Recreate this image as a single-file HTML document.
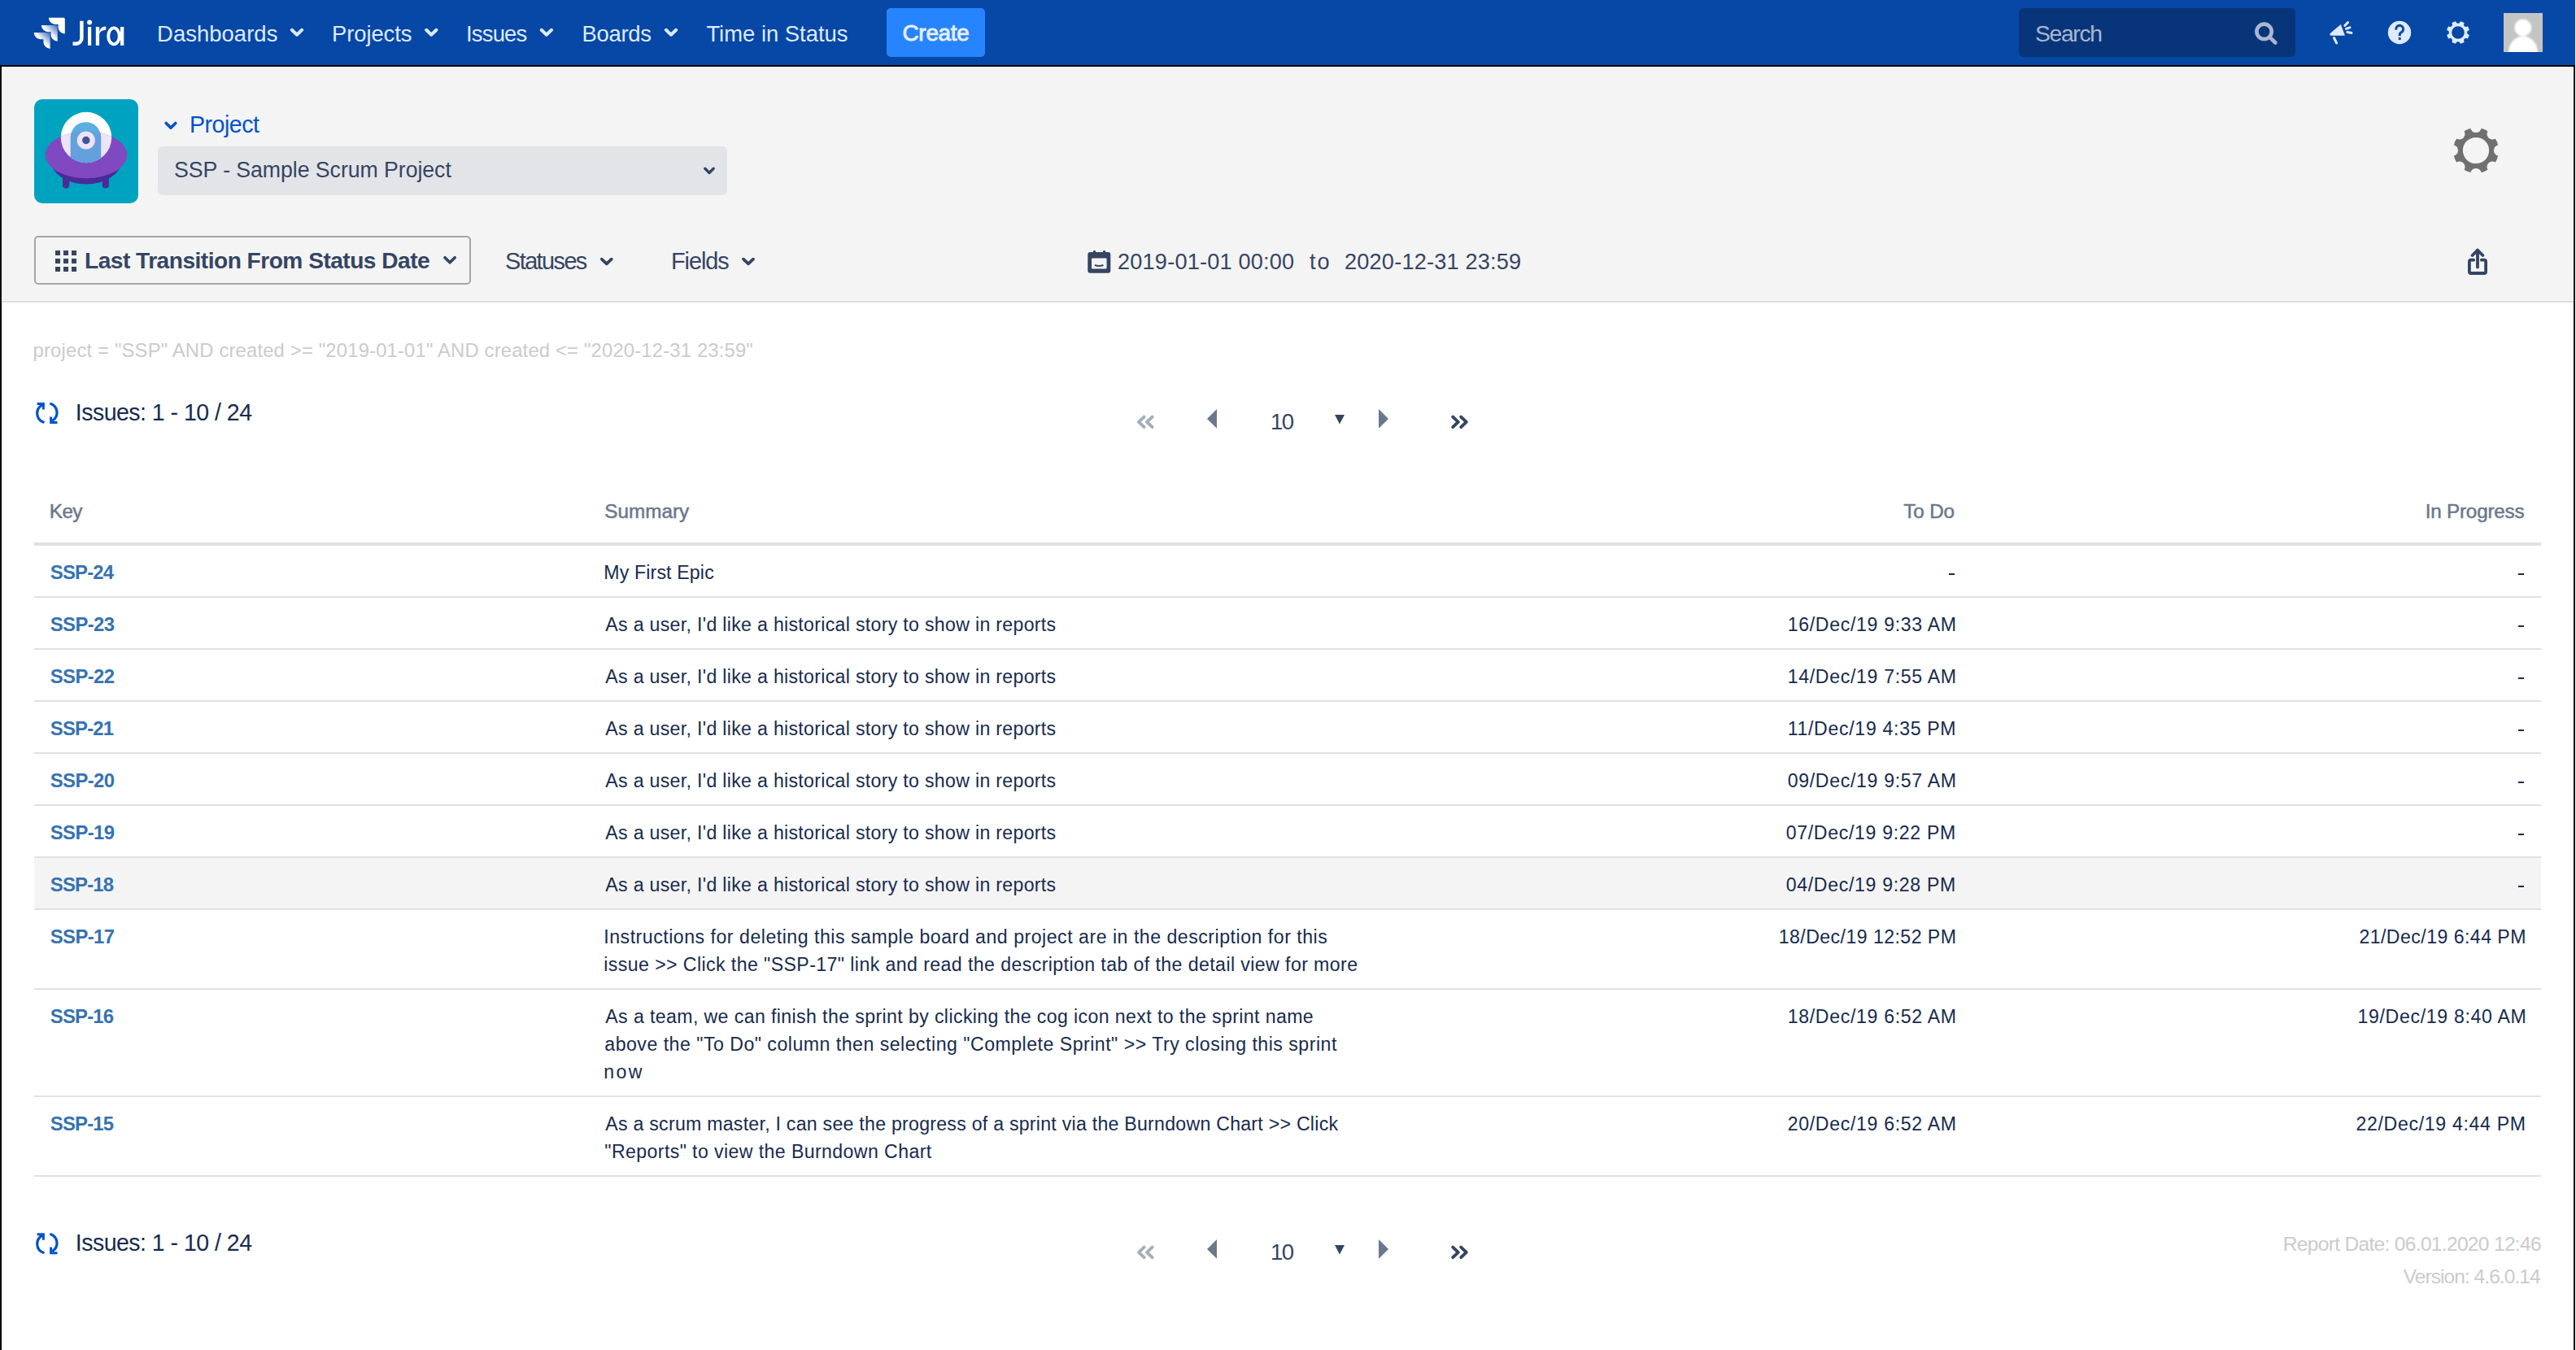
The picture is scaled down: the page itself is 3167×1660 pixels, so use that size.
<!DOCTYPE html>
<html><head><meta charset="utf-8"><style>
html,body{margin:0;padding:0;}
body{width:3167px;height:1660px;position:relative;overflow:hidden;background:#fff;font-family:"Liberation Sans",sans-serif;}
.a{position:absolute;}
.t{position:absolute;white-space:nowrap;}
svg{position:absolute;overflow:visible;}
</style></head><body>
<div class="a" style="left:0px;top:0px;width:3166px;height:80px;background:#0747a6;"></div>
<div class="a" style="left:0px;top:80px;width:3166px;height:2px;background:#000;"></div>
<div class="a" style="left:0px;top:80px;width:2px;height:1580px;background:#000;"></div>
<div class="a" style="left:3164px;top:80px;width:2px;height:1580px;background:#000;"></div>
<div class="a" style="left:2px;top:82px;width:3162px;height:288px;background:#fff;"></div>
<div class="a" style="left:3px;top:83px;width:3160px;height:287px;background:#f4f4f4;"></div>
<div class="a" style="left:2px;top:370px;width:3162px;height:2px;background:#dcdde3;"></div>
<div class="a" style="left:1090px;top:10px;width:121px;height:60px;background:#2684ff;border-radius:5px;"></div>
<div class="a" style="left:2482px;top:10px;width:340px;height:60px;background:#08357a;border-radius:6px;"></div>
<svg class="a" style="left:0;top:0" width="3167" height="1660" viewBox="0 0 3167 1660"><defs><linearGradient id="jg1" x1="0.95" y1="0.05" x2="0.35" y2="0.65"><stop offset="0" stop-color="#fff" stop-opacity="0.25"/><stop offset="0.75" stop-color="#fff"/></linearGradient></defs><g transform="translate(38,18) scale(1.9)"><path fill="#fff" d="M11.53 2c0 2.4 1.97 4.35 4.35 4.35h1.78v1.7c0 2.4 1.94 4.34 4.34 4.35V2.84a.84.84 0 0 0-.84-.84H11.53z"/><path fill="url(#jg1)" d="M6.77 6.8a4.362 4.362 0 0 0 4.34 4.34h1.8v1.72a4.362 4.362 0 0 0 4.34 4.34V7.63a.841.841 0 0 0-.83-.83H6.77z"/><path fill="url(#jg1)" d="M2 11.6c0 2.4 1.95 4.34 4.35 4.34h1.78v1.72c.01 2.39 1.95 4.34 4.34 4.34v-9.57a.84.84 0 0 0-.84-.84L2 11.6z"/></g><path fill="#fff" d="M98.2,25.8 H102.6 V47 A9,9 0 0 1 93.6,56 H89.5 V51.4 H93.6 A4.4,4.4 0 0 0 98.2,47 Z"/><circle cx="110.1" cy="27.4" r="3" fill="#fff"/><rect x="108" y="33.1" width="4.2" height="22.8" fill="#fff"/><rect x="117.8" y="33.1" width="4.3" height="22.8" fill="#fff"/><path fill="#fff" d="M122.1,41 C122.1,35.5 125,32.5 130.2,32.5 V36.9 C126.3,36.9 122.1,38.5 122.1,43 Z"/><ellipse cx="140" cy="44.4" rx="6.8" ry="10.0" fill="none" stroke="#fff" stroke-width="3.9"/><rect x="148" y="33.1" width="4.3" height="22.8" fill="#fff"/><polyline points="358.8,36.8 365.0,42.699999999999996 371.2,36.8" fill="none" stroke="#deebff" stroke-width="4.0" stroke-linecap="round" stroke-linejoin="round"/><polyline points="524.0999999999999,36.8 530.3,42.699999999999996 536.5,36.8" fill="none" stroke="#deebff" stroke-width="4.0" stroke-linecap="round" stroke-linejoin="round"/><polyline points="665.65,36.8 671.85,42.699999999999996 678.0500000000001,36.8" fill="none" stroke="#deebff" stroke-width="4.0" stroke-linecap="round" stroke-linejoin="round"/><polyline points="818.8,36.8 825.0,42.699999999999996 831.2,36.8" fill="none" stroke="#deebff" stroke-width="4.0" stroke-linecap="round" stroke-linejoin="round"/><circle cx="2783.6" cy="38.8" r="9.2" fill="none" stroke="#a9b7d0" stroke-width="4.6"/><line x1="2790.5" y1="45.7" x2="2797.3" y2="52.5" stroke="#a9b7d0" stroke-width="4.6" stroke-linecap="round"/><path fill="#deebff" d="M2864.8,41.1 L2877.8,30.0 L2883.0,43.8 L2866.0,43.8 Q2863.6,43.4 2864.8,41.1 Z"/><line x1="2869.5" y1="46.5" x2="2872.7" y2="53" stroke="#deebff" stroke-width="3" stroke-linecap="round"/><g stroke="#deebff" stroke-width="3" stroke-linecap="round"><line x1="2882.8" y1="31.5" x2="2886.5" y2="27.6"/><line x1="2884.5" y1="35.4" x2="2889" y2="33.8"/><line x1="2886" y1="39.6" x2="2891" y2="40.4"/></g><circle cx="2950" cy="40" r="14.2" fill="#deebff"/><path d="M2945.9,36.6 A4.4,4.4 0 1 1 2952.3,39.6 Q2950.3,40.6 2950.3,42.4 V44.2" fill="none" stroke="#0747a6" stroke-width="3" stroke-linecap="butt"/><rect x="2948.6" y="45.9" width="3.3" height="3.2" rx="1" fill="#0747a6"/><mask id="g1" maskUnits="userSpaceOnUse" x="3002.95" y="20.95" width="38.1" height="38.1"><rect x="3002.95" y="20.95" width="38.1" height="38.1" fill="#000"/><circle cx="3022" cy="40" r="14.05" fill="#fff"/><circle cx="3022.00" cy="26.10" r="2.75" fill="#000"/><circle cx="3031.83" cy="30.17" r="2.75" fill="#000"/><circle cx="3035.90" cy="40.00" r="2.75" fill="#000"/><circle cx="3031.83" cy="49.83" r="2.75" fill="#000"/><circle cx="3022.00" cy="53.90" r="2.75" fill="#000"/><circle cx="3012.17" cy="49.83" r="2.75" fill="#000"/><circle cx="3008.10" cy="40.00" r="2.75" fill="#000"/><circle cx="3012.17" cy="30.17" r="2.75" fill="#000"/><circle cx="3022" cy="40" r="7.8" fill="#000"/></mask><rect x="3002.95" y="20.95" width="38.1" height="38.1" fill="#deebff" mask="url(#g1)"/><defs><clipPath id="avc"><rect x="3078" y="16" width="48" height="48"/></clipPath><filter id="avb" x="-30%" y="-30%" width="160%" height="160%"><feGaussianBlur stdDeviation="1.3"/></filter></defs><rect x="3078" y="16" width="48" height="48" fill="#c4c4c4"/><g clip-path="url(#avc)"><g filter="url(#avb)"><circle cx="3101.8" cy="34" r="10.4" fill="#fff"/><ellipse cx="3102" cy="65" rx="18" ry="20.5" fill="#fff"/></g></g><g transform="translate(42,122)"><rect width="128" height="128" rx="10" fill="#00a3bf"/><defs><clipPath id="sauc"><ellipse cx="64" cy="68.4" rx="50.3" ry="28.8"/></clipPath><clipPath id="dome"><circle cx="64" cy="47" r="31.2"/></clipPath></defs><rect x="35" y="88" width="8.2" height="21.5" rx="4.1" fill="#4b2a99"/><rect x="83.7" y="88" width="8.2" height="21.5" rx="4.1" fill="#4b2a99"/><ellipse cx="64" cy="74" rx="44" ry="30.5" fill="#4b2a99"/><circle cx="64" cy="47" r="31.2" fill="#fff"/><ellipse cx="64" cy="68.4" rx="50.3" ry="28.8" fill="#8049c2"/><g clip-path="url(#sauc)"><circle cx="64" cy="47" r="31.2" fill="#ece4f6"/></g><g clip-path="url(#dome)"><path d="M44.8,46.8 A18.65,18.65 0 0 1 82.1,46.8 V90 H44.8 Z" fill="#5aaee0"/><g clip-path="url(#sauc)"><path d="M44.8,46.8 A18.65,18.65 0 0 1 82.1,46.8 V90 H44.8 Z" fill="#64a0dc"/></g></g><circle cx="63.8" cy="50.5" r="11.1" fill="#ece4f6"/><circle cx="63.8" cy="50.5" r="4.7" fill="#3f5495"/></g><polyline points="204.2,151.5 210,157.1 215.8,151.5" fill="none" stroke="#0052cc" stroke-width="3.6" stroke-linecap="round" stroke-linejoin="round"/></svg>
<div class="a" style="left:194px;top:180px;width:700px;height:60px;background:#e3e4e8;border-radius:6px;"></div>
<div class="a" style="left:42px;top:290px;width:533px;height:56px;border:2px solid #a5a5a5;border-radius:5px;"></div>
<div class="a" style="left:68px;top:308px;width:6px;height:6px;background:#344563;"></div>
<div class="a" style="left:68px;top:318px;width:6px;height:6px;background:#344563;"></div>
<div class="a" style="left:68px;top:328px;width:6px;height:6px;background:#344563;"></div>
<div class="a" style="left:78px;top:308px;width:6px;height:6px;background:#344563;"></div>
<div class="a" style="left:78px;top:318px;width:6px;height:6px;background:#344563;"></div>
<div class="a" style="left:78px;top:328px;width:6px;height:6px;background:#344563;"></div>
<div class="a" style="left:88px;top:308px;width:6px;height:6px;background:#344563;"></div>
<div class="a" style="left:88px;top:318px;width:6px;height:6px;background:#344563;"></div>
<div class="a" style="left:88px;top:328px;width:6px;height:6px;background:#344563;"></div>
<div class="a" style="left:42px;top:667px;width:3082px;height:4px;background:#dfe1e6;"></div>
<div class="a" style="left:42px;top:1055px;width:3082px;height:62px;background:#f4f4f4;"></div>
<div class="a" style="left:42px;top:733px;width:3082px;height:2px;background:#dfe1e6;"></div>
<div class="a" style="left:42px;top:797px;width:3082px;height:2px;background:#dfe1e6;"></div>
<div class="a" style="left:42px;top:861px;width:3082px;height:2px;background:#dfe1e6;"></div>
<div class="a" style="left:42px;top:925px;width:3082px;height:2px;background:#dfe1e6;"></div>
<div class="a" style="left:42px;top:989px;width:3082px;height:2px;background:#dfe1e6;"></div>
<div class="a" style="left:42px;top:1053px;width:3082px;height:2px;background:#dfe1e6;"></div>
<div class="a" style="left:42px;top:1117px;width:3082px;height:2px;background:#dfe1e6;"></div>
<div class="a" style="left:42px;top:1215px;width:3082px;height:2px;background:#dfe1e6;"></div>
<div class="a" style="left:42px;top:1347px;width:3082px;height:2px;background:#dfe1e6;"></div>
<div class="a" style="left:42px;top:1445px;width:3082px;height:2px;background:#dfe1e6;"></div>
<svg class="a" style="left:0;top:0" width="3167" height="1660" viewBox="0 0 3167 1660"><polyline points="866.8,207.3 872,212.5 877.2,207.3" fill="none" stroke="#344563" stroke-width="3.4" stroke-linecap="round" stroke-linejoin="round"/><polyline points="547.0,316.7 553.1,322.8 559.2,316.7" fill="none" stroke="#344563" stroke-width="3.6" stroke-linecap="round" stroke-linejoin="round"/><polyline points="739.8,318.6 745.8,324.40000000000003 751.8,318.6" fill="none" stroke="#344563" stroke-width="3.7" stroke-linecap="round" stroke-linejoin="round"/><polyline points="914.0,318.6 920.0,324.40000000000003 926.0,318.6" fill="none" stroke="#344563" stroke-width="3.7" stroke-linecap="round" stroke-linejoin="round"/><mask id="g2" maskUnits="userSpaceOnUse" x="3011.0" y="152.0" width="66.0" height="66.0"><rect x="3011.0" y="152.0" width="66.0" height="66.0" fill="#000"/><circle cx="3044" cy="185" r="28.0" fill="#fff"/><circle cx="3044.00" cy="156.40" r="6.7" fill="#000"/><circle cx="3064.22" cy="164.78" r="6.7" fill="#000"/><circle cx="3072.60" cy="185.00" r="6.7" fill="#000"/><circle cx="3064.22" cy="205.22" r="6.7" fill="#000"/><circle cx="3044.00" cy="213.60" r="6.7" fill="#000"/><circle cx="3023.78" cy="205.22" r="6.7" fill="#000"/><circle cx="3015.40" cy="185.00" r="6.7" fill="#000"/><circle cx="3023.78" cy="164.78" r="6.7" fill="#000"/><circle cx="3044" cy="185" r="16.1" fill="#000"/></mask><rect x="3011.0" y="152.0" width="66.0" height="66.0" fill="#707070" mask="url(#g2)"/><rect x="1337.3" y="310" width="28" height="25.8" rx="3" fill="#344563"/><rect x="1342" y="317.6" width="18.6" height="13" rx="1" fill="#f4f4f4"/><rect x="1344" y="308" width="3" height="4" rx="1" fill="#344563"/><rect x="1356" y="308" width="3" height="4" rx="1" fill="#344563"/><path d="M1346,326 Q1351.2,328 1356.4,326" stroke="#344563" stroke-width="2" fill="none"/><g fill="none" stroke="#344563" stroke-width="3.8" stroke-linecap="round" stroke-linejoin="round"><polyline points="3039.6,314 3046,307.6 3052.4,314"/><line x1="3046" y1="308" x2="3046" y2="328.5"/><path d="M3041.2,319.7 H3037.9 Q3035.9,319.7 3035.9,321.7 V334 Q3035.9,336 3037.9,336 H3054.1 Q3056.1,336 3056.1,334 V321.7 Q3056.1,319.7 3054.1,319.7 H3050.8"/></g><g transform="translate(0,0.0)" fill="none" stroke="#0052cc" stroke-width="3.2" stroke-linecap="round"><path d="M53.2,519.1 A11.6,11.6 0 0 1 51.2,498.4"/><polyline points="45.6,496.5 53.4,496.5 53.4,503.6" stroke-width="2.9" stroke-linecap="butt" stroke-linejoin="miter"/><path d="M62.6,496.6 A11.6,11.6 0 0 1 65.4,516.6"/><polyline points="62.6,512.4 62.6,519.5 70.5,519.5" stroke-width="2.9" stroke-linecap="butt" stroke-linejoin="miter"/></g><g fill="none" stroke="#a5adba" stroke-width="3.9" stroke-linecap="round" stroke-linejoin="round"><polyline points="1406.6,512.6 1400,518.9 1406.6,525.2"/><polyline points="1416.6,512.6 1410,518.9 1416.6,525.2"/></g><polygon points="1484,515 1496,503 1496,526.8" fill="#6b778c"/><polygon points="1641,510 1653,510 1647,521.4" fill="#344563"/><polygon points="1695,503 1707,515 1695,526.8" fill="#6b778c"/><g fill="none" stroke="#344563" stroke-width="3.9" stroke-linecap="round" stroke-linejoin="round"><polyline points="1786.2,512.6 1792.8,518.9 1786.2,525.2"/><polyline points="1796.2,512.6 1802.8,518.9 1796.2,525.2"/></g><g transform="translate(0,1021.2)" fill="none" stroke="#0052cc" stroke-width="3.2" stroke-linecap="round"><path d="M53.2,519.1 A11.6,11.6 0 0 1 51.2,498.4"/><polyline points="45.6,496.5 53.4,496.5 53.4,503.6" stroke-width="2.9" stroke-linecap="butt" stroke-linejoin="miter"/><path d="M62.6,496.6 A11.6,11.6 0 0 1 65.4,516.6"/><polyline points="62.6,512.4 62.6,519.5 70.5,519.5" stroke-width="2.9" stroke-linecap="butt" stroke-linejoin="miter"/></g><g fill="none" stroke="#a5adba" stroke-width="3.9" stroke-linecap="round" stroke-linejoin="round"><polyline points="1406.6,1533.6 1400,1539.9 1406.6,1546.2"/><polyline points="1416.6,1533.6 1410,1539.9 1416.6,1546.2"/></g><polygon points="1484,1536 1496,1524 1496,1547.8" fill="#6b778c"/><polygon points="1641,1531 1653,1531 1647,1542.4" fill="#344563"/><polygon points="1695,1524 1707,1536 1695,1547.8" fill="#6b778c"/><g fill="none" stroke="#344563" stroke-width="3.9" stroke-linecap="round" stroke-linejoin="round"><polyline points="1786.2,1533.6 1792.8,1539.9 1786.2,1546.2"/><polyline points="1796.2,1533.6 1802.8,1539.9 1796.2,1546.2"/></g></svg>
<div class="t" style="top:27.88px;font-size:27.43px;line-height:27.43px;color:#deebff;letter-spacing:0.044px;left:193.10px;">Dashboards</div><div class="t" style="top:27.88px;font-size:27.43px;line-height:27.43px;color:#deebff;letter-spacing:-0.086px;left:408.00px;">Projects</div><div class="t" style="top:27.88px;font-size:27.43px;line-height:27.43px;color:#deebff;letter-spacing:-0.800px;left:573.00px;">Issues</div><div class="t" style="top:27.88px;font-size:27.43px;line-height:27.43px;color:#deebff;letter-spacing:-0.240px;left:715.40px;">Boards</div><div class="t" style="top:27.88px;font-size:27.43px;line-height:27.43px;color:#deebff;letter-spacing:-0.008px;left:868.40px;">Time in Status</div><div class="t" style="top:27.42px;font-size:27.86px;line-height:27.86px;color:#e6efff;letter-spacing:-0.260px;-webkit-text-stroke:0.9px #e6efff;left:1109.50px;">Create</div><div class="t" style="top:27.45px;font-size:28.29px;line-height:28.29px;color:#a9b7d0;letter-spacing:-1.340px;left:2502.00px;">Search</div><div class="t" style="top:139.42px;font-size:28.57px;line-height:28.57px;color:#0052cc;letter-spacing:-0.500px;left:233.00px;">Project</div><div class="t" style="top:196.40px;font-size:26.71px;line-height:26.71px;color:#344563;letter-spacing:-0.060px;left:214.00px;">SSP - Sample Scrum Project</div><div class="t" style="top:307.38px;font-size:28.14px;line-height:28.14px;color:#344563;letter-spacing:-0.516px;font-weight:700;left:104.00px;">Last Transition From Status Date</div><div class="t" style="top:306.77px;font-size:28.86px;line-height:28.86px;color:#344563;letter-spacing:-1.571px;left:621.00px;">Statuses</div><div class="t" style="top:306.77px;font-size:28.86px;line-height:28.86px;color:#344563;letter-spacing:-1.060px;left:825.00px;">Fields</div><div class="t" style="top:308.13px;font-size:27.14px;line-height:27.14px;color:#344563;letter-spacing:0.200px;left:1374.00px;">2019-01-01 00:00</div><div class="t" style="top:308.13px;font-size:27.14px;line-height:27.14px;color:#344563;letter-spacing:2.000px;left:1610.00px;">to</div><div class="t" style="top:308.13px;font-size:27.14px;line-height:27.14px;color:#344563;letter-spacing:0.200px;left:1653.00px;">2020-12-31 23:59</div><div class="t" style="top:419.12px;font-size:23.86px;line-height:23.86px;color:#cbcbcb;letter-spacing:0.150px;left:40.60px;">project = "SSP" AND created &gt;= "2019-01-01" AND created &lt;= "2020-12-31 23:59"</div><div class="t" style="top:493.42px;font-size:28.57px;line-height:28.57px;color:#172b4d;letter-spacing:-0.544px;left:92.80px;">Issues: 1 - 10 / 24</div><div class="t" style="top:505.17px;font-size:27.57px;line-height:27.57px;color:#344563;letter-spacing:-1.500px;left:1562.00px;">10</div><div class="t" style="top:1514.02px;font-size:28.57px;line-height:28.57px;color:#172b4d;letter-spacing:-0.544px;left:92.80px;">Issues: 1 - 10 / 24</div><div class="t" style="top:1526.17px;font-size:27.57px;line-height:27.57px;color:#344563;letter-spacing:-1.500px;left:1562.00px;">10</div><div class="t" style="top:617.05px;font-size:24.29px;line-height:24.29px;color:#6b778c;letter-spacing:-0.600px;-webkit-text-stroke:0.5px #6b778c;left:60.80px;">Key</div><div class="t" style="top:617.05px;font-size:24.29px;line-height:24.29px;color:#6b778c;letter-spacing:0.000px;-webkit-text-stroke:0.5px #6b778c;left:743.30px;">Summary</div><div class="t" style="top:617.05px;font-size:24.29px;line-height:24.29px;color:#6b778c;letter-spacing:-0.150px;-webkit-text-stroke:0.5px #6b778c;left:2340.30px;">To Do</div><div class="t" style="top:617.05px;font-size:24.29px;line-height:24.29px;color:#6b778c;letter-spacing:-0.240px;-webkit-text-stroke:0.5px #6b778c;left:2981.80px;">In Progress</div><div class="t" style="top:692.12px;font-size:23.86px;line-height:23.86px;color:#3572b0;letter-spacing:-0.800px;font-weight:700;left:61.80px;">SSP-24</div><div class="t" style="top:693.23px;font-size:23.14px;line-height:23.14px;color:#172b4d;letter-spacing:0.150px;left:742.30px;">My First Epic</div><div class="t" style="top:756.12px;font-size:23.86px;line-height:23.86px;color:#3572b0;letter-spacing:-0.600px;font-weight:700;left:61.80px;">SSP-23</div><div class="t" style="top:757.23px;font-size:23.14px;line-height:23.14px;color:#172b4d;letter-spacing:0.309px;left:744.30px;">As a user, I'd like a historical story to show in reports</div><div class="t" style="top:757.23px;font-size:23.14px;line-height:23.14px;color:#172b4d;letter-spacing:0.669px;left:2197.70px;">16/Dec/19 9:33 AM</div><div class="t" style="top:820.12px;font-size:23.86px;line-height:23.86px;color:#3572b0;letter-spacing:-0.600px;font-weight:700;left:61.80px;">SSP-22</div><div class="t" style="top:821.23px;font-size:23.14px;line-height:23.14px;color:#172b4d;letter-spacing:0.309px;left:744.30px;">As a user, I'd like a historical story to show in reports</div><div class="t" style="top:821.23px;font-size:23.14px;line-height:23.14px;color:#172b4d;letter-spacing:0.669px;left:2197.70px;">14/Dec/19 7:55 AM</div><div class="t" style="top:884.12px;font-size:23.86px;line-height:23.86px;color:#3572b0;letter-spacing:-0.800px;font-weight:700;left:61.80px;">SSP-21</div><div class="t" style="top:885.23px;font-size:23.14px;line-height:23.14px;color:#172b4d;letter-spacing:0.309px;left:744.30px;">As a user, I'd like a historical story to show in reports</div><div class="t" style="top:885.23px;font-size:23.14px;line-height:23.14px;color:#172b4d;letter-spacing:0.669px;left:2197.70px;">11/Dec/19 4:35 PM</div><div class="t" style="top:948.12px;font-size:23.86px;line-height:23.86px;color:#3572b0;letter-spacing:-0.600px;font-weight:700;left:61.80px;">SSP-20</div><div class="t" style="top:949.23px;font-size:23.14px;line-height:23.14px;color:#172b4d;letter-spacing:0.309px;left:744.30px;">As a user, I'd like a historical story to show in reports</div><div class="t" style="top:949.23px;font-size:23.14px;line-height:23.14px;color:#172b4d;letter-spacing:0.669px;left:2197.70px;">09/Dec/19 9:57 AM</div><div class="t" style="top:1012.12px;font-size:23.86px;line-height:23.86px;color:#3572b0;letter-spacing:-0.600px;font-weight:700;left:61.80px;">SSP-19</div><div class="t" style="top:1013.23px;font-size:23.14px;line-height:23.14px;color:#172b4d;letter-spacing:0.309px;left:744.30px;">As a user, I'd like a historical story to show in reports</div><div class="t" style="top:1013.23px;font-size:23.14px;line-height:23.14px;color:#172b4d;letter-spacing:0.669px;left:2195.70px;">07/Dec/19 9:22 PM</div><div class="t" style="top:1076.12px;font-size:23.86px;line-height:23.86px;color:#3572b0;letter-spacing:-0.800px;font-weight:700;left:61.80px;">SSP-18</div><div class="t" style="top:1077.23px;font-size:23.14px;line-height:23.14px;color:#172b4d;letter-spacing:0.309px;left:744.30px;">As a user, I'd like a historical story to show in reports</div><div class="t" style="top:1077.23px;font-size:23.14px;line-height:23.14px;color:#172b4d;letter-spacing:0.669px;left:2195.70px;">04/Dec/19 9:28 PM</div><div class="t" style="top:1140.12px;font-size:23.86px;line-height:23.86px;color:#3572b0;letter-spacing:-0.600px;font-weight:700;left:61.80px;">SSP-17</div><div class="t" style="top:1141.23px;font-size:23.14px;line-height:23.14px;color:#172b4d;letter-spacing:0.508px;left:742.30px;">Instructions for deleting this sample board and project are in the description for this</div><div class="t" style="top:1175.23px;font-size:23.14px;line-height:23.14px;color:#172b4d;letter-spacing:0.412px;left:742.30px;">issue &gt;&gt; Click the "SSP-17" link and read the description tab of the detail view for more</div><div class="t" style="top:1141.23px;font-size:23.14px;line-height:23.14px;color:#172b4d;letter-spacing:0.435px;left:2186.70px;">18/Dec/19 12:52 PM</div><div class="t" style="top:1141.23px;font-size:23.14px;line-height:23.14px;color:#172b4d;letter-spacing:0.444px;left:2900.40px;">21/Dec/19 6:44 PM</div><div class="t" style="top:1238.12px;font-size:23.86px;line-height:23.86px;color:#3572b0;letter-spacing:-0.800px;font-weight:700;left:61.80px;">SSP-16</div><div class="t" style="top:1239.23px;font-size:23.14px;line-height:23.14px;color:#172b4d;letter-spacing:0.389px;left:744.30px;">As a team, we can finish the sprint by clicking the cog icon next to the sprint name</div><div class="t" style="top:1273.23px;font-size:23.14px;line-height:23.14px;color:#172b4d;letter-spacing:0.490px;left:743.30px;">above the "To Do" column then selecting "Complete Sprint" &gt;&gt; Try closing this sprint</div><div class="t" style="top:1307.23px;font-size:23.14px;line-height:23.14px;color:#172b4d;letter-spacing:2.400px;left:742.30px;">now</div><div class="t" style="top:1239.23px;font-size:23.14px;line-height:23.14px;color:#172b4d;letter-spacing:0.669px;left:2197.70px;">18/Dec/19 6:52 AM</div><div class="t" style="top:1239.23px;font-size:23.14px;line-height:23.14px;color:#172b4d;letter-spacing:0.669px;left:2898.40px;">19/Dec/19 8:40 AM</div><div class="t" style="top:1370.12px;font-size:23.86px;line-height:23.86px;color:#3572b0;letter-spacing:-0.800px;font-weight:700;left:61.80px;">SSP-15</div><div class="t" style="top:1371.23px;font-size:23.14px;line-height:23.14px;color:#172b4d;letter-spacing:0.257px;left:744.30px;">As a scrum master, I can see the progress of a sprint via the Burndown Chart &gt;&gt; Click</div><div class="t" style="top:1405.23px;font-size:23.14px;line-height:23.14px;color:#172b4d;letter-spacing:0.400px;left:743.30px;">"Reports" to view the Burndown Chart</div><div class="t" style="top:1371.23px;font-size:23.14px;line-height:23.14px;color:#172b4d;letter-spacing:0.669px;left:2197.70px;">20/Dec/19 6:52 AM</div><div class="t" style="top:1371.23px;font-size:23.14px;line-height:23.14px;color:#172b4d;letter-spacing:0.669px;left:2896.40px;">22/Dec/19 4:44 PM</div><div class="t" style="top:1517.82px;font-size:24.57px;line-height:24.57px;color:#cbcbcb;letter-spacing:-0.696px;left:2806.80px;">Report Date: 06.01.2020 12:46</div><div class="t" style="top:1557.82px;font-size:24.57px;line-height:24.57px;color:#cbcbcb;letter-spacing:-0.962px;left:2954.70px;">Version: 4.6.0.14</div>
<div class="a" style="left:2395.6px;top:705px;width:7px;height:1.9px;background:#172b4d"></div><div class="a" style="left:3096.3px;top:705px;width:7px;height:1.9px;background:#172b4d"></div><div class="a" style="left:3096.3px;top:769px;width:7px;height:1.9px;background:#172b4d"></div><div class="a" style="left:3096.3px;top:833px;width:7px;height:1.9px;background:#172b4d"></div><div class="a" style="left:3096.3px;top:897px;width:7px;height:1.9px;background:#172b4d"></div><div class="a" style="left:3096.3px;top:961px;width:7px;height:1.9px;background:#172b4d"></div><div class="a" style="left:3096.3px;top:1025px;width:7px;height:1.9px;background:#172b4d"></div><div class="a" style="left:3096.3px;top:1089px;width:7px;height:1.9px;background:#172b4d"></div>
</body></html>
